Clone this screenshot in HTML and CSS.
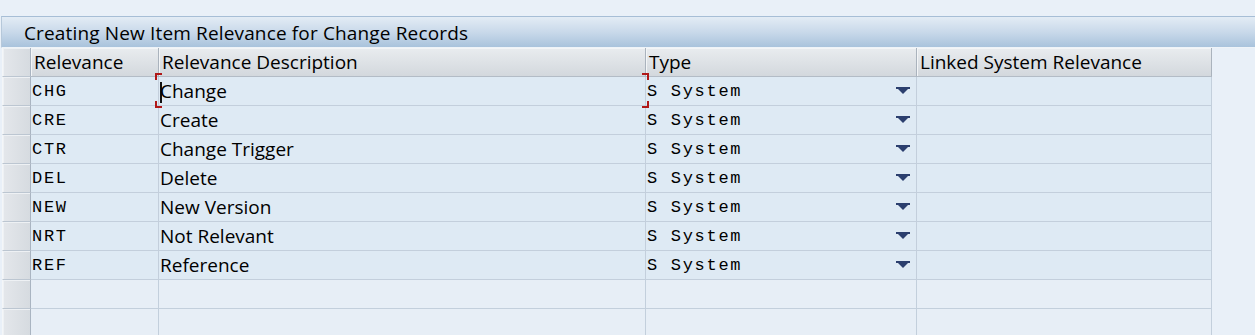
FILE: index.html
```html
<!DOCTYPE html>
<html>
<head>
    <title>Item Relevance for Change Records</title>
    <link rel="stylesheet" href="styles.css">
</head>
<body>
    <div class="screen">
        <div class="title-bar">Creating New Item Relevance for Change Records</div>

        <div class="grid">
            <div class="sel"></div>
            <div class="head">Relevance</div>
            <div class="head">Relevance Description</div>
            <div class="head">Type</div>
            <div class="head">Linked System Relevance</div>

            <div class="sel"></div>
            <div class="cell mono">CHG</div>
            <div class="cell desc focus">
                <span class="caret"></span>Change
                <span class="br br-tl"></span><span class="br br-bl"></span>
                <span class="br br-tr"></span><span class="br br-br"></span>
            </div>
            <div class="cell mono type">S System<span class="arrow"></span></div>
            <div class="cell"></div>

            <div class="sel"></div>
            <div class="cell mono">CRE</div>
            <div class="cell desc">Create</div>
            <div class="cell mono type">S System<span class="arrow"></span></div>
            <div class="cell"></div>

            <div class="sel"></div>
            <div class="cell mono">CTR</div>
            <div class="cell desc">Change Trigger</div>
            <div class="cell mono type">S System<span class="arrow"></span></div>
            <div class="cell"></div>

            <div class="sel"></div>
            <div class="cell mono">DEL</div>
            <div class="cell desc">Delete</div>
            <div class="cell mono type">S System<span class="arrow"></span></div>
            <div class="cell"></div>

            <div class="sel"></div>
            <div class="cell mono">NEW</div>
            <div class="cell desc">New Version</div>
            <div class="cell mono type">S System<span class="arrow"></span></div>
            <div class="cell"></div>

            <div class="sel"></div>
            <div class="cell mono">NRT</div>
            <div class="cell desc">Not Relevant</div>
            <div class="cell mono type">S System<span class="arrow"></span></div>
            <div class="cell"></div>

            <div class="sel"></div>
            <div class="cell mono">REF</div>
            <div class="cell desc">Reference</div>
            <div class="cell mono type">S System<span class="arrow"></span></div>
            <div class="cell"></div>

            <div class="sel"></div>
            <div class="cell empty"></div>
            <div class="cell empty"></div>
            <div class="cell empty"></div>
            <div class="cell empty"></div>

            <div class="sel"></div>
            <div class="cell empty"></div>
            <div class="cell empty"></div>
            <div class="cell empty"></div>
            <div class="cell empty"></div>
        </div>
    </div>
</body>
</html>
```

FILE: styles.css
```css
body {
    margin: 0;
    background: #e9f0f8;
    font-family: "Open Sans", "Noto Sans", sans-serif;
    color: #000;
    overflow: hidden;
}

.screen {
    padding-top: 16px;
}

.title-bar {
    height: 30px;
    margin-left: 1px;
    border-top: 1px solid #a7bed6;
    border-left: 1px solid #b6c8da;
    border-bottom: 1px solid #eef3f8;
    background: linear-gradient(#e3ecf5, #c9d9ea 50%, #a9c3dc);
    font-size: 19px;
    letter-spacing: 0.15px;
    line-height: 33px;
    padding-left: 22px;
    overflow: hidden;
}

.grid {
    display: grid;
    grid-template-columns: 29px 128px 487px 271px 295px;
    grid-auto-rows: 29px;
    margin-left: 2px;
    width: 1210px;
}

.grid > div {
    box-sizing: border-box;
    border-right: 1px solid #c3cfdc;
    border-bottom: 1px solid #c3cfdc;
    white-space: nowrap;
}

.sel {
    background: linear-gradient(90deg, #e4e7eb, #d6dbe0);
    border-left: 1px solid #f4f6f8;
    box-shadow: inset 1px 1px 0 #eef1f4;
    border-right-color: #a9b4c1 !important;
    border-bottom-color: #bcc6d1 !important;
}

.head {
    background: linear-gradient(#e9ecef, #d3d8dd);
    border-right-color: #aab3bd !important;
    border-bottom-color: #b3bcc6 !important;
    box-shadow: inset 1px 1px 0 #f3f5f7;
    font-size: 19px;
    line-height: 28px;
    padding-left: 3px;
}

.cell {
    background: #deeaf4;
    font-size: 19px;
    line-height: 29px;
    padding-left: 1px;
    position: relative;
}

.cell.empty {
    background: #e7eef6;
}

.mono {
    font-family: "Liberation Mono", "Courier New", monospace;
    font-size: 17px;
    letter-spacing: 1.7px;
    line-height: 29px;
}

.focus {
    z-index: 2;
}

.type .arrow {
    position: absolute;
    left: 250px;
    top: 10px;
    width: 14px;
    height: 8px;
    background:
        linear-gradient(#2b3f6e, #2b3f6e) top / 14px 2px no-repeat;
}

.type .arrow::after {
    content: "";
    position: absolute;
    left: 2px;
    top: 2px;
    border-left: 5px solid transparent;
    border-right: 5px solid transparent;
    border-top: 5px solid #2b3f6e;
}

.caret {
    display: inline-block;
    width: 2px;
    height: 21px;
    background: #111;
    vertical-align: -5px;
    margin-right: -2px;
}

.br {
    position: absolute;
    box-sizing: border-box;
    width: 7px;
    height: 7px;
    border: 0 solid #b01818;
    z-index: 3;
}

.br-tl {
    left: -4px;
    top: -4px;
    border-left-width: 2px;
    border-top-width: 2px;
}

.br-bl {
    left: -4px;
    bottom: -3px;
    border-left-width: 2px;
    border-bottom-width: 2px;
}

.br-tr {
    right: -4px;
    top: -4px;
    border-right-width: 2px;
    border-top-width: 2px;
}

.br-br {
    right: -4px;
    bottom: -3px;
    border-right-width: 2px;
    border-bottom-width: 2px;
}
```
